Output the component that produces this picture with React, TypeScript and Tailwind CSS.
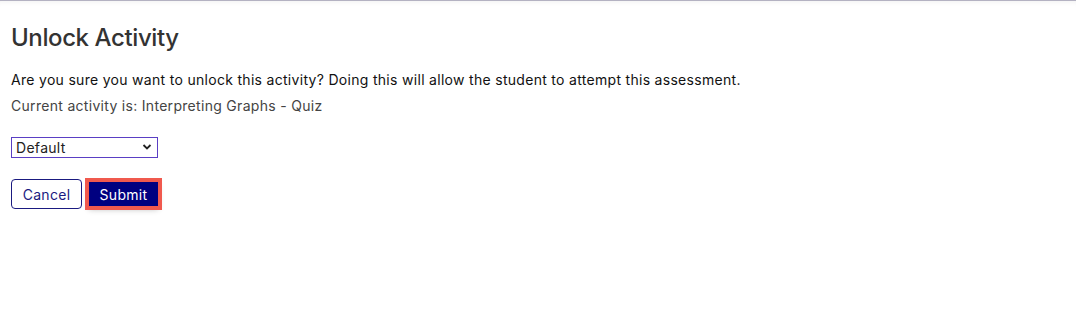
import React from "react";

export default function App() {
  return (
    <div className="w-[1076px] h-[329px] bg-white border-t border-[#b4b2c2] shadow-[inset_0_6px_6px_-6px_rgba(0,0,0,0.08)] font-['Inter',sans-serif] overflow-hidden">
      <div className="px-[11px] pt-[22px]">
        <h1 className="text-[24px] leading-[29px] font-medium tracking-[-0.4px] text-[#333333]">Unlock Activity</h1>
        <p className="mt-[18px] text-[14px] leading-[20px] tracking-[0.3px] text-[#111111]">
          Are you sure you want to unlock this activity? Doing this will allow the student to attempt this assessment.
        </p>
        <p className="mt-[6px] text-[14px] leading-[20px] tracking-[0.3px] text-[#444444]">
          Current activity is: Interpreting Graphs - Quiz
        </p>
        <div className="mt-[21px] relative w-[147px] h-[21px] border border-[#5a3fc4] bg-white">
          <span className="absolute left-[4px] top-[1px] text-[14px] leading-[17px] tracking-[0.3px] text-[#222222]">Default</span>
          <svg className="absolute right-[5px] top-[5px]" width="10" height="8" viewBox="0 0 10 8">
            <path d="M1.5 2 L5 5.5 L8.5 2" fill="none" stroke="#222" strokeWidth="1.8" />
          </svg>
        </div>
        <div className="mt-[21px] flex items-center gap-[6px]">
          <button className="w-[71px] h-[30px] rounded-[4px] border border-[#1a1a80] bg-white text-[14px] tracking-[0.3px] text-[#1a1a80]">
            Cancel
          </button>
          <button className="w-[69px] h-[24px] bg-[#000080] text-[14px] tracking-[0.3px] text-white outline outline-[4px] outline-[#f0594e] shadow-[0_3px_6px_rgba(0,0,0,0.3)] ml-[1px]">
            Submit
          </button>
        </div>
      </div>
    </div>
  );
}
